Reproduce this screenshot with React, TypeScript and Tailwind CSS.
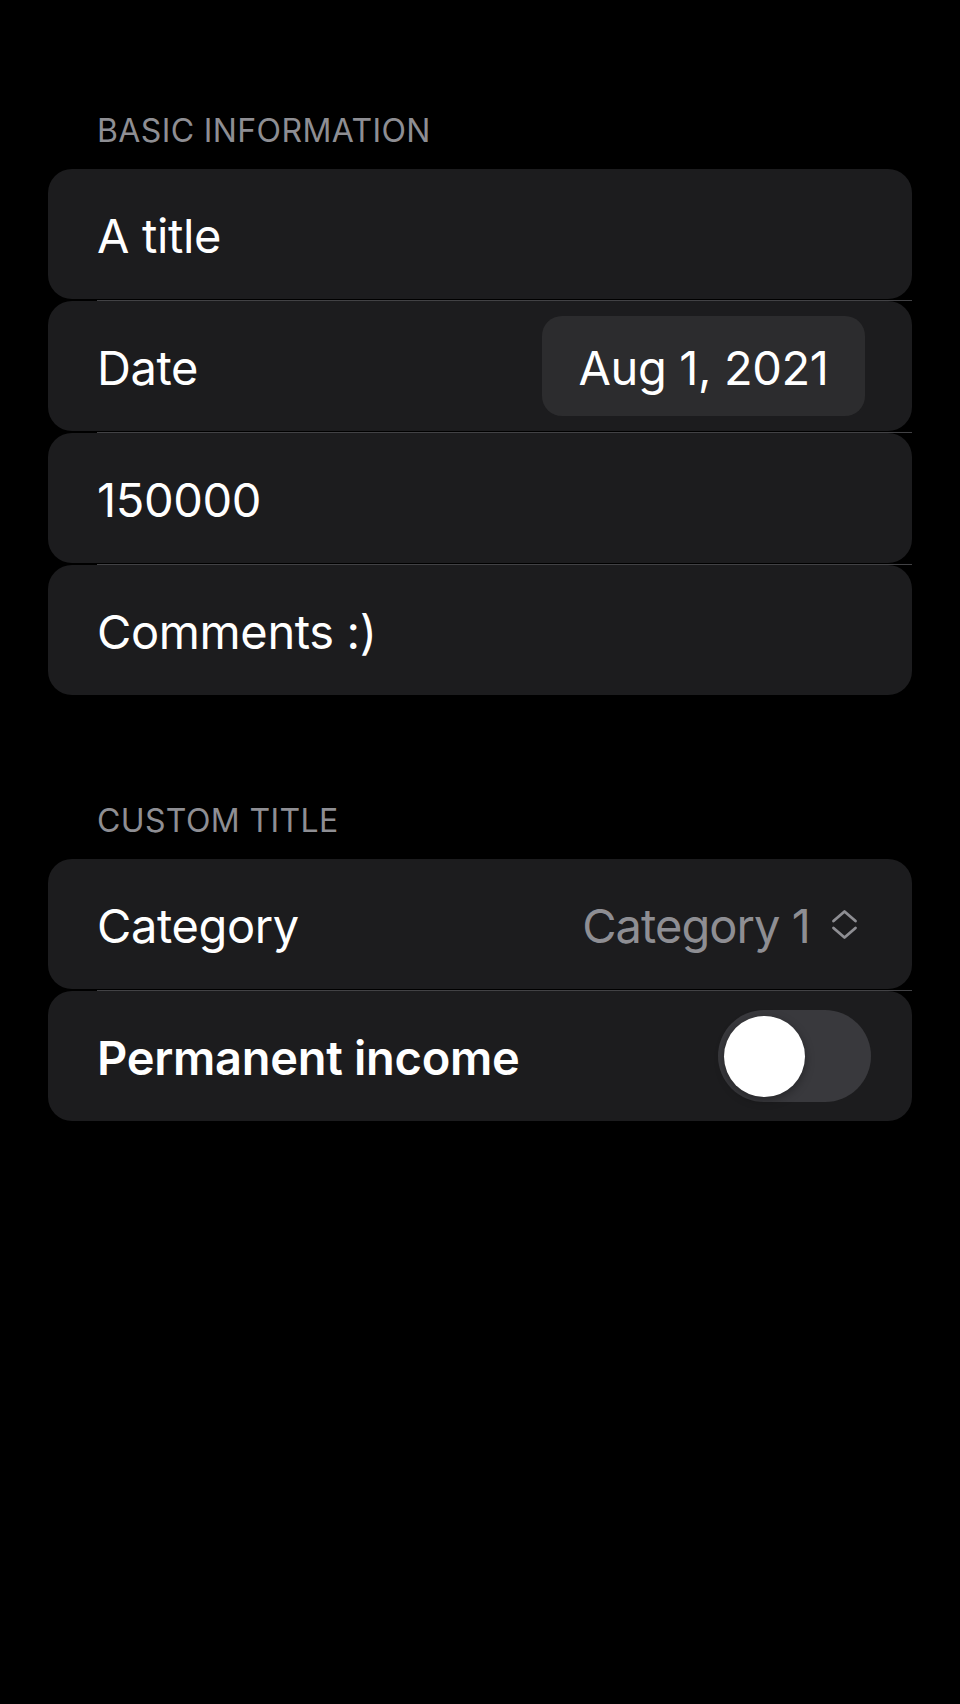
import React from 'react'

function Divider() {
  return (
    <div className="h-[2px] pl-[49px] flex items-end">
      <div className="h-px w-full bg-[#424245]" />
    </div>
  )
}

function Row({ children, className = '' }: { children: React.ReactNode; className?: string }) {
  return (
    <div className={`h-[130px] rounded-[24px] bg-[#1c1c1e] flex items-center justify-between pl-[49px] ${className}`}>
      {children}
    </div>
  )
}

function SectionHeader({ title }: { title: string }) {
  return (
    <div className="pl-[49px] h-[40px] text-[32px] leading-[40px] tracking-[0.012em] uppercase text-[#8e8e93] mb-[18px]">
      {title}
    </div>
  )
}

function UpDownChevron() {
  return (
    <svg width="29" height="31" viewBox="0 0 29 31" fill="none" stroke="#8e8e93" strokeWidth={2.8} strokeLinecap="round" strokeLinejoin="round">
      <path d="M3.5 12L14.5 2.5L25.5 12" />
      <path d="M3.5 19L14.5 28.5L25.5 19" />
    </svg>
  )
}

export default function App() {
  return (
    <div className="min-h-[1704px] w-full bg-black px-[48px] pt-[111px] text-white font-[Inter,'Liberation_Sans',sans-serif]">
      <SectionHeader title="Basic Information" />
      <div className="flex flex-col text-[47px] tracking-[-0.008em]">
        <Row>
          <span className="pt-[5px]">A title</span>
        </Row>
        <Divider />
        <Row className="pr-[47px]">
          <span className="pt-[5px]">Date</span>
          <div className="h-[100px] w-[323px] rounded-[20px] bg-[#2c2c2e] flex items-center justify-center pt-[5px]">
            Aug 1, 2021
          </div>
        </Row>
        <Divider />
        <Row>
          <span className="pt-[5px]">150000</span>
        </Row>
        <Divider />
        <Row>
          <span className="pt-[5px]">Comments :)</span>
        </Row>
      </div>

      <div className="mt-[106px]">
        <SectionHeader title="Custom Title" />
        <div className="flex flex-col text-[47px] tracking-[-0.008em]">
          <Row className="pr-[53px]">
            <span className="pt-[5px]">Category</span>
            <div className="flex items-center gap-[20px]">
              <span className="pt-[5px] text-[#8e8e93] tracking-[-0.02em]">Category 1</span>
              <UpDownChevron />
            </div>
          </Row>
          <Divider />
          <Row className="pr-[41px]">
            <span className="pt-[5px] font-semibold tracking-[-0.006em]">Permanent income</span>
            <button className="relative h-[92px] w-[153px] rounded-full bg-[#39393d]">
              <span className="absolute left-[6px] top-[5.5px] h-[81px] w-[81px] rounded-full bg-white shadow-[0_3px_10px_rgba(0,0,0,0.35)]" />
            </button>
          </Row>
        </div>
      </div>
    </div>
  )
}
